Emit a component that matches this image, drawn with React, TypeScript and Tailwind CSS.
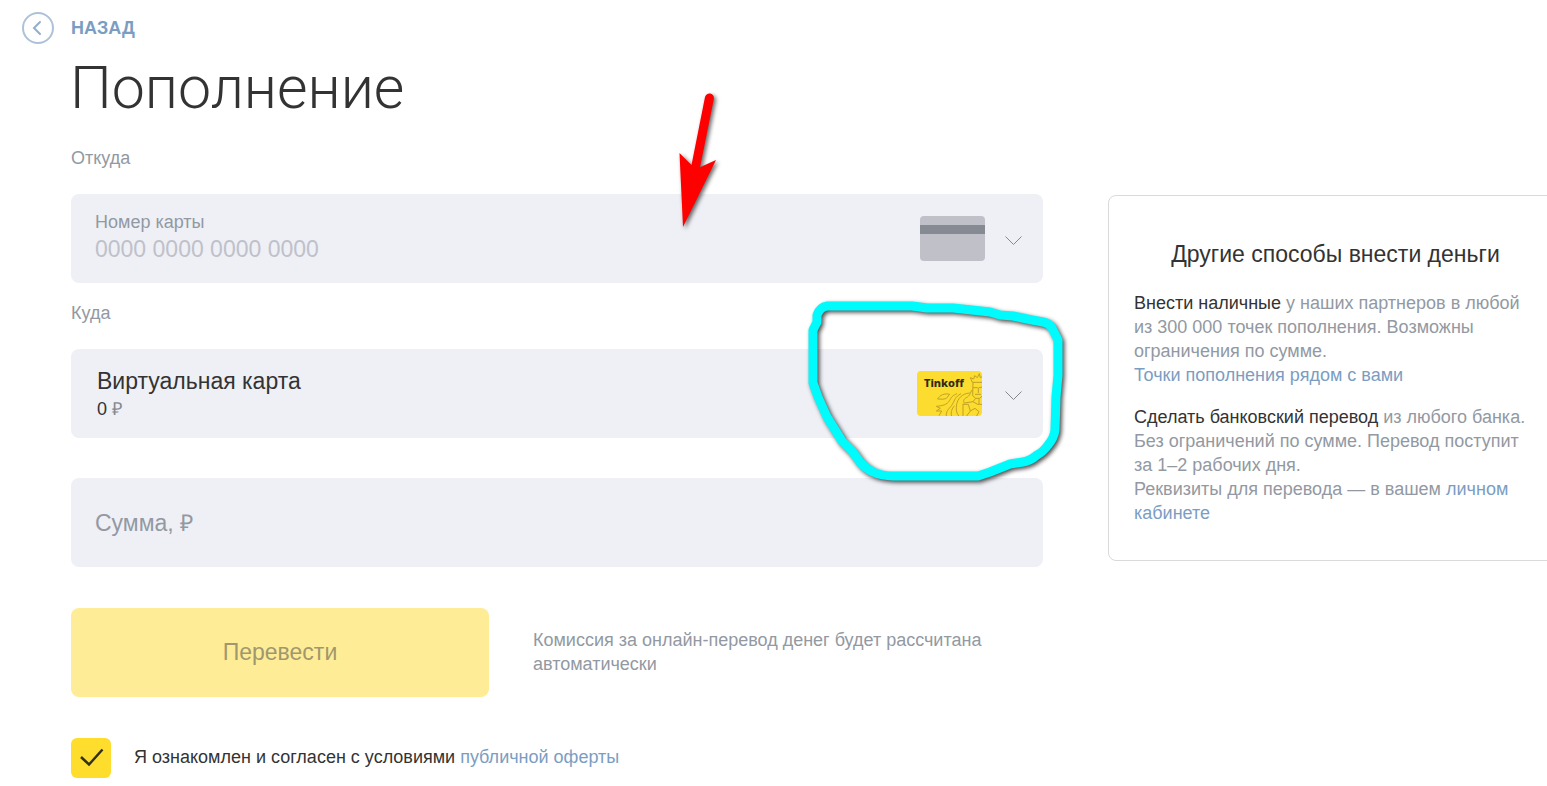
import { useState } from 'react'
import type { ReactNode } from 'react'

function ChevronDown() {
  return (
    <svg viewBox="0 0 18 14" className="h-[14px] w-[18px]" fill="none" stroke="#85888f" strokeWidth="1">
      <path d="M0.5 4.5 L8.5 12.5 L16.5 4.5" />
    </svg>
  )
}

function BlankCard() {
  return (
    <svg viewBox="0 0 65 45" className="h-[45px] w-[65px]">
      <rect width="65" height="45" rx="4" fill="#bfc0c8" />
      <rect y="9" width="65" height="9" fill="#868a93" />
    </svg>
  )
}

function TinkoffCard() {
  return (
    <div className="relative h-[45px] w-[65px] overflow-hidden rounded bg-[#fbdc2f]">
      <svg viewBox="0 0 195 135" className="absolute inset-0 h-full w-full" fill="none" stroke="#c0a128" strokeWidth="3">
        <path d="M166 34 L160 20 L170 24 L173 14 L181 20 L187 8 L190 20 L197 16 M166 34 L197 34" />
        <path d="M168 34 L167 74 L176 82 L188 82 L197 74 M168 50 L182 50 M186 50 L197 48 M184 50 L184 66 M174 70 L192 70" />
        <path d="M166 56 C158 66 160 74 148 80 C140 84 138 90 142 96 L168 92 L176 82" />
        <path d="M62 84 C68 72 84 66 98 70 L88 82 C80 86 72 84 62 84 Z" />
        <path d="M120 68 C106 74 104 78 98 88 C90 102 76 104 58 106 L70 112 L58 120 L74 120 L66 134" />
        <path d="M132 68 C114 78 114 86 106 100 C100 112 86 116 88 136" />
        <path d="M158 66 C134 68 122 84 119 100 C116 114 118 126 126 136" />
        <path d="M138 98 L138 136 M138 100 L154 100 L160 120 L148 136 M168 92 L182 100 L197 100 M160 120 L174 112 L186 122 L178 136 M186 82 L186 100" />
        <path d="M104 136 C100 122 106 112 112 104" />
      </svg>
      <span className="absolute top-1 left-[7px] font-['Noto_Sans'] text-[11px] leading-[15px] font-extrabold text-[#2f2a14]">
        Tinkoff
      </span>
    </div>
  )
}

function RedArrow() {
  return (
    <svg
      viewBox="0 0 50 145"
      className="pointer-events-none absolute -top-[104px] right-[319px] h-[145px] w-[50px] drop-shadow-[2px_2px_2px_rgba(0,0,0,0.6)]"
      fill="#fe0000"
    >
      <path d="M31 7 A4.4 4.4 0 0 1 39.8 9 L26 77.2 L42 70 L9 137 L5.5 63 L17.5 75 Z" />
    </svg>
  )
}

function CyanLoop() {
  return (
    <svg
      viewBox="0 0 270 200"
      className="pointer-events-none absolute -top-[59px] -right-[27px] h-[200px] w-[270px] drop-shadow-[2px_2px_2px_rgba(0,0,0,0.7)]"
      fill="none"
      stroke="#00fbfd"
      strokeWidth="9"
      strokeLinejoin="round"
      strokeLinecap="round"
    >
      <path d="M27 16 L112 16 L127 18 L153 18 L190 22 L200 25 L213 26 L232 30 L243 32 Q249 33 252 38 L258 50 L258 85 L256 107 L255 140 Q254 148 248 155 Q243 162 237 165 Q230 171 223 172 L210 174 L190 182 L178 186 L93 186 Q82 186 73 182 Q65 178 60 172 L52 161 L42 151 L27 127 L18 107 L13 93 L13 40 L17 32 L17 25 Q20 17 27 16 Z" />
    </svg>
  )
}

function Link({ children }: { children: ReactNode }) {
  return (
    <a href="#" className="text-[#7b9dc2] hover:underline">
      {children}
    </a>
  )
}

export default function App() {
  const [agreed, setAgreed] = useState(true)

  return (
    <div className="overflow-hidden bg-white pb-2 font-['Liberation_Sans',Arial,sans-serif] text-[18px] leading-6 text-[#333]">
      <header className="pt-3 pl-[22px]">
        <a href="#" className="flex h-8 w-fit items-center gap-[17px] font-bold text-[#7b9dc2]">
          <svg viewBox="0 0 32 32" className="h-8 w-8" fill="none" stroke="#adc2da" strokeWidth="2">
            <circle cx="16" cy="16" r="15" />
            <path d="M18 10 L12 16 L18 22" stroke="#93aecd" strokeLinecap="round" />
          </svg>
          НАЗАД
        </a>
        <h1 className="mt-[14px] pl-12 font-['Roboto',sans-serif] text-[59px] leading-[60px] font-light text-[#333]">
          Пополнение
        </h1>
      </header>

      <div className="flex items-start gap-[65px] pl-[71px]">
        <form className="min-w-0 flex-1 pt-7" onSubmit={(e) => e.preventDefault()}>
          {/* Source card */}
          <p className="text-[#9299a2]">Откуда</p>
          <div className="relative mt-6 flex h-[89px] items-center rounded-lg bg-[#eef0f6] pr-5 pl-6">
            <div className="flex flex-1 flex-col pb-0.5">
              <label htmlFor="card-number" className="text-[#9299a2]">
                Номер карты
              </label>
              <input
                id="card-number"
                placeholder="0000 0000 0000 0000"
                className="h-8 w-full bg-transparent text-[23px] outline-none placeholder:text-[#bfc1c9]"
              />
            </div>
            <BlankCard />
            <button type="button" aria-label="Выбрать карту" className="ml-5">
              <ChevronDown />
            </button>
            <RedArrow />
          </div>

          {/* Target account */}
          <label htmlFor="target" className="mt-[18px] block text-[#9299a2]">
            Куда
          </label>
          <div className="relative mt-6 flex h-[89px] items-center rounded-lg bg-[#eef0f6] pr-5 pl-[26px]">
            <div className="flex flex-1 flex-col pb-0.5">
              <select
                id="target"
                className="h-8 w-full appearance-none bg-transparent text-[23px] leading-8 outline-none"
              >
                <option>Виртуальная карта</option>
              </select>
              <span>
                0 <span className="text-[#85888f]">₽</span>
              </span>
            </div>
            <TinkoffCard />
            <span className="ml-[23px]">
              <ChevronDown />
            </span>
            <CyanLoop />
          </div>

          <input
            aria-label="Сумма, ₽"
            placeholder="Сумма, ₽"
            className="mt-10 block h-[89px] w-full rounded-lg bg-[#eef0f6] px-6 pt-0.5 text-[23px] outline-none placeholder:text-[#9299a2]"
          />

          <div className="mt-[41px] flex items-center gap-11">
            <button className="h-[89px] w-[43%] rounded-lg bg-[#ffec96] pb-0.5 text-[23px] text-[#9f986f]">
              Перевести
            </button>
            <p className="flex-1 pb-0.5 text-[#9299a2]">
              Комиссия за онлайн-перевод денег будет рассчитана автоматически
            </p>
          </div>

          <div className="mt-[41px] flex items-center gap-[23px]">
            <span className="relative h-10 w-10">
              <input
                id="offer"
                type="checkbox"
                checked={agreed}
                onChange={(e) => setAgreed(e.target.checked)}
                className="block h-10 w-10 appearance-none rounded-md bg-[#eef0f6] checked:bg-[#ffdd2d]"
              />
              {agreed && (
                <svg
                  viewBox="0 0 40 40"
                  className="pointer-events-none absolute inset-0"
                  fill="none"
                  stroke="#333018"
                  strokeWidth="2.5"
                >
                  <path d="M10 19 L18 26.5 L31.5 11.5" />
                </svg>
              )}
            </span>
            <p className="pb-0.5">
              <label htmlFor="offer">Я ознакомлен и согласен с условиями</label> <Link>публичной оферты</Link>
            </p>
          </div>
        </form>

        <aside className="mt-[77px] -mr-4 w-[455px] shrink-0 rounded-lg border border-[#d9dadb] px-[25px] pt-[42px] pb-[35px] text-[#9299a2]">
          <h2 className="text-center text-[23px] leading-8 text-[#333]">Другие способы внести деньги</h2>
          <p className="mt-[21px]">
            <span className="text-[#333]">Внести наличные</span> у наших партнеров в любой
            <br />
            из 300 000 точек пополнения. Возможны
            <br />
            ограничения по сумме.
            <br />
            <Link>Точки пополнения рядом с вами</Link>
          </p>
          <p className="mt-[18px]">
            <span className="text-[#333]">Сделать банковский перевод</span> из любого банка.
            <br />
            Без ограничений по сумме. Перевод поступит
            <br />
            за 1–2 рабочих дня.
            <br />
            Реквизиты для перевода — в вашем <Link>личном</Link>
            <br />
            <Link>кабинете</Link>
          </p>
        </aside>
      </div>
    </div>
  )
}
